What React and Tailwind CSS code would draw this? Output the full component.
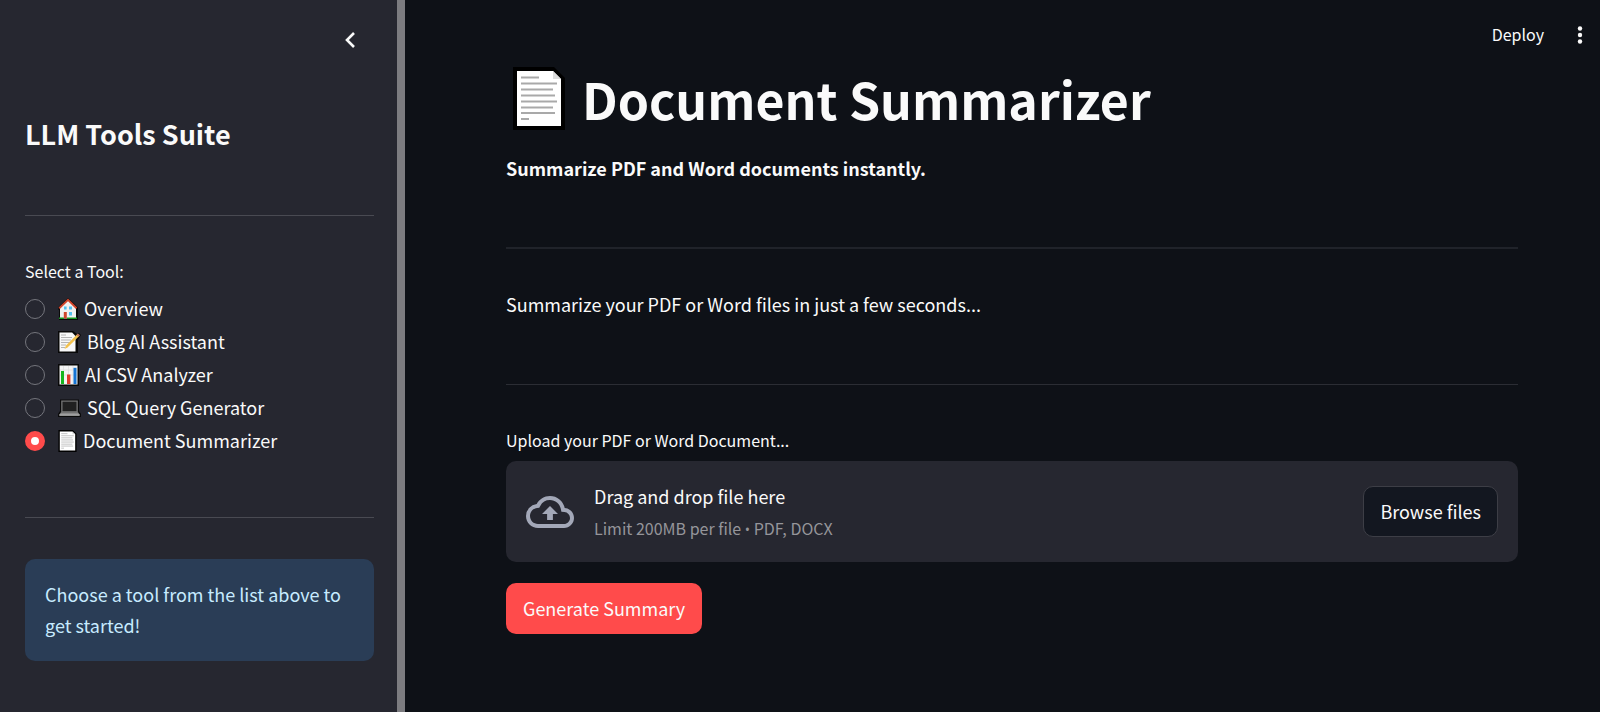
import { useRef, useState } from "react";

function HomeIcon({ className }) {
  return (
    <svg viewBox="0 0 20 22" className={className} aria-hidden="true">
      <path d="M10 0 0.5 9v3H1v10h19V9.5L16.5 6z" fill="#080808" />
      <path d="M2 20.5V9.5L10 2.5l8 7v11z" fill="#f0f0f0" />
      <path d="M1.2 10.2 10 1.8l8.6 8.4" fill="none" stroke="#d0452c" strokeWidth="1.9" />
      <path d="M6 8.5h2.6v3H6zM11 8.5h3v3h-3zM11 14h3v3.4h-3z" fill="#53c2f0" />
      <path d="M5.8 14h3v6.5h-3z" fill="#d0452c" />
      <path d="M1 19.6h4.8v1.4H1zM9 19.6h10v1.4H9z" fill="#16961e" />
    </svg>
  );
}

function MemoIcon({ className }) {
  return (
    <svg viewBox="0 0 23 22" className={className} aria-hidden="true">
      <path d="M0 0h15l4 3 2-1 2 2-3 5v13H0z" fill="#080808" />
      <path d="M1.5 1.5h12.6L17.5 5v15.5h-16z" fill="#f8f8f8" />
      <path d="M3 4h5M3 6.5h11M3 9h10M3 11.5h9M3 14h5M3 16.5h4" stroke="#b4b4b4" strokeWidth="1" />
      <path d="M6.5 18 8 14.5 19.5 3l2 1.8L9.5 16.5z" fill="#f2c14e" />
      <path d="m18.5 4 1.300-1.500 2.200 1.800-1.500 1.500z" fill="#b9705a" />
    </svg>
  );
}

function ChartIcon({ className }) {
  return (
    <svg viewBox="0 0 21 22" className={className} aria-hidden="true">
      <path d="M0 0h21v22H0z" fill="#080808" />
      <path d="M1.5 1.5h18v19h-18z" fill="#f4f4f4" />
      <path d="M5.5 2v18M10.5 2v18M15 2v18M2 6h17M2 11h17" stroke="#dedede" strokeWidth="0.8" />
      <path d="M3 7h3v13H3z" fill="#16b51e" />
      <path d="M9 10.5h3.4V20H9z" fill="#e0392b" />
      <path d="M15.5 3.8h3V20h-3z" fill="#1574d4" />
    </svg>
  );
}

function LaptopIcon({ className }) {
  return (
    <svg viewBox="0 0 23 22" className={className} aria-hidden="true">
      <path d="M2 2.5h19V14l2 3v3H0v-3l2-3z" fill="#0a0a0a" />
      <path d="M3.2 3.5h16.6v11.8H3.2z" fill="#777" />
      <path d="M4.5 4.7h14v9.5h-14z" fill="#202020" />
      <path d="M3 15.3h17l1.5 2.2h-20z" fill="#8a8a8a" />
      <path d="M1.3 17.2h20.4v1.6H1.3z" fill="#b5b5b5" />
    </svg>
  );
}

function PageIcon({ className }) {
  return (
    <svg viewBox="0 0 52 63" className={className} aria-hidden="true">
      <path d="M0 0h41l11 11v52H0z" fill="#000" />
      <path d="M4 4h36l8 8v47H4z" fill="#fff" />
      <path d="M40 4v8h8z" fill="#dcdcdc" />
      <path
        d="M8 10.5h18M8 16.5h36M8 22.5h32M8 28.5h34M8 34.5h36M8 40.5h32M8 46h34M8 52h8"
        stroke="#a9a9a9"
        strokeWidth="2"
      />
    </svg>
  );
}

const TOOLS = [
  { id: "overview", label: "Overview", Icon: HomeIcon, size: "w-5" },
  { id: "blog", label: "Blog AI Assistant", Icon: MemoIcon, size: "w-[23px]" },
  { id: "csv", label: "AI CSV Analyzer", Icon: ChartIcon, size: "w-[21px]" },
  { id: "sql", label: "SQL Query Generator", Icon: LaptopIcon, size: "w-[23px]" },
  { id: "document", label: "Document Summarizer", Icon: PageIcon, size: "w-[19px]" },
];

function Sidebar() {
  const [tool, setTool] = useState("document");
  return (
    <aside className="flex w-[405px] shrink-0 border-r-8 border-[#7c7c80] bg-[#262730]">
      <div className="min-w-0 flex-1 pr-[23px] pl-[25px]">
        <div className="flex h-20 items-center justify-end">
          <button type="button" aria-label="Collapse sidebar" className="flex size-12 items-center justify-center">
            <svg viewBox="0 0 24 24" className="size-6" fill="none" stroke="#fafafa" strokeWidth="2.6" aria-hidden="true">
              <path d="m16 5-7 7 7 7" />
            </svg>
          </button>
        </div>
        <h2 className="mt-9 text-[27px] leading-9 font-semibold">LLM Tools Suite</h2>
        <hr className="mt-[63px] border-[#494a52]" />
        <fieldset className="mt-[42px]">
          <legend className="mb-2 text-base leading-[26px]">Select a Tool:</legend>
          {TOOLS.map(({ id, label, Icon, size }) => (
            <label key={id} htmlFor={id} className="flex h-[33px] items-center">
              <input
                id={id}
                type="radio"
                name="tool"
                checked={tool === id}
                onChange={() => setTool(id)}
                className="mr-[13px] size-5 shrink-0 appearance-none rounded-full border border-[#74757c] checked:border-[6px] checked:border-[#ff4b4b] checked:bg-white"
              />
              <Icon className={"mr-1.5 h-[22px] shrink-0 " + size} />
              <span>{label}</span>
            </label>
          ))}
        </fieldset>
        <hr className="mt-[60px] border-[#494a52]" />
        <p className="mt-[41px] rounded-[10px] bg-[#2a3d56] p-5 leading-[31px] text-[#c7ebff]">
          Choose a tool from the list above to get started!
        </p>
      </div>
    </aside>
  );
}

function Uploader() {
  const fileInput = useRef(null);
  return (
    <div>
      <label htmlFor="upload" className="mt-[42px] block text-base leading-[26px]">
        Upload your PDF or Word Document...
      </label>
      <input ref={fileInput} id="upload" type="file" accept=".pdf,.docx" className="hidden" />
      <div className="mt-2 flex min-h-[101px] items-center rounded-[10px] bg-[#262730] px-5 py-4">
        <svg viewBox="0 0 24 24" className="mr-5 size-12 shrink-0" fill="#a3a8b8" aria-hidden="true">
          <path d="M19.35 10.04A7.49 7.49 0 0 0 12 4C9.11 4 6.6 5.64 5.35 8.04A5.994 5.994 0 0 0 0 14c0 3.31 2.69 6 6 6h13c2.76 0 5-2.24 5-5 0-2.64-2.05-4.78-4.65-4.96zM19 18H6c-2.21 0-4-1.79-4-4 0-2.05 1.53-3.76 3.56-3.97l1.07-.11.5-.95A5.469 5.469 0 0 1 12 6c2.62 0 4.88 1.86 5.39 4.43l.3 1.5 1.53.11A2.98 2.98 0 0 1 22 15c0 1.65-1.35 3-3 3zM8 13h2.55v3h2.9v-3H16l-4-4z" />
        </svg>
        <div className="flex-1 pt-0.5 leading-8">
          <p>Drag and drop file here</p>
          <p className="font-['Open_Sans','Noto_Sans_CJK_SC',sans-serif] text-[#95959a]">
            <span className="font-['Noto_Sans_CJK_SC',sans-serif] text-base leading-8">Limit 200MB per file </span>
            <span className="text-sm leading-8">•</span>
            <span className="font-['Noto_Sans_CJK_SC',sans-serif] text-base leading-8"> PDF, DOCX</span>
          </p>
        </div>
        <button
          type="button"
          onClick={() => fileInput.current.click()}
          className="h-[51px] rounded-[10px] border border-[#3d3e46] bg-[#131720] px-4"
        >
          Browse files
        </button>
      </div>
    </div>
  );
}

export default function App() {
  return (
    <div className="flex min-h-screen bg-[#0e1117] font-['Noto_Sans_CJK_SC',sans-serif] text-[18px] text-[#fafafa]">
      <Sidebar />
      <main className="min-w-0 flex-1">
        <header className="flex h-16 items-start justify-end gap-7 pt-5 pr-3">
          <button type="button" className="text-base leading-7">Deploy</button>
          <button type="button" aria-label="Main menu" className="flex h-[30px] w-4 items-center justify-center">
            <svg viewBox="0 0 6 18" className="h-[18px] w-1.5" fill="#fafafa" aria-hidden="true">
              <circle cx="3" cy="2.5" r="2.2" />
              <circle cx="3" cy="9" r="2.2" />
              <circle cx="3" cy="15.5" r="2.2" />
            </svg>
          </button>
        </header>
        <div className="pr-[82px] pl-[101px]">
          <h1 className="flex items-center text-[50px] leading-[68px] font-bold">
            <PageIcon className="mr-[17px] ml-[7px] h-[63px] w-[52px] shrink-0" />
            Document Summarizer
          </h1>
          <p className="mt-[21px] leading-[30px] font-bold">Summarize PDF and Word documents instantly.</p>
          <hr className="mt-16 border-t-2 border-[#20232a]" />
          <p className="mt-10 leading-[30px]">Summarize your PDF or Word files in just a few seconds...</p>
          <hr className="mt-[65px] border-[#2b2d34]" />
          <Uploader />
          <button type="button" className="mt-[21px] h-[51px] rounded-[10px] bg-[#ff4b4b] px-[17px]">
            Generate Summary
          </button>
        </div>
      </main>
    </div>
  );
}
